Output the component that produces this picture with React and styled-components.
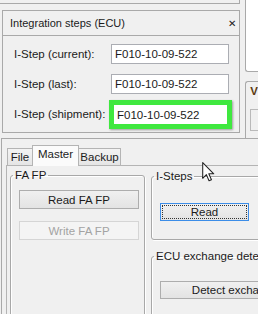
import React from 'react';
import styled, { createGlobalStyle, css } from 'styled-components';

const GlobalStyle = createGlobalStyle`
  html, body {
    margin: 0;
    padding: 0;
    background: #f0f0f0;
  }
  body {
    font-family: "Liberation Sans", Arial, sans-serif;
    font-size: 11.5px;
    color: #1b1b1b;
  }
`;

const steps = [
  { label: 'I-Step (current):', value: 'F010-10-09-522' },
  { label: 'I-Step (last):', value: 'F010-10-09-522' },
  { label: 'I-Step (shipment):', value: 'F010-10-09-522', marked: true },
];

const tabs = [
  { name: 'File', width: 26 },
  { name: 'Master', width: 47, active: true },
  { name: 'Backup', width: 43 },
];

const App = () => (
  <>
    <GlobalStyle />
    <Screen>
      <TopRow>
        <LeftCol>
          <PrevPanelEdge />
          <StepsPanel>
            <PanelHeader>
              <span>Integration steps (ECU)</span>
              <CloseGlyph>✕</CloseGlyph>
            </PanelHeader>
            <StepRows>
              {steps.map((s) => (
                <StepRow key={s.label}>
                  <StepLabel>{s.label}</StepLabel>
                  <StepField $marked={s.marked}>{s.value}</StepField>
                </StepRow>
              ))}
            </StepRows>
          </StepsPanel>
        </LeftCol>
        <SideCol>
          <SideTopBox />
          <SideBox>
            <SideLetter>V</SideLetter>
            <SideButton />
          </SideBox>
        </SideCol>
      </TopRow>
      <Lower>
        <TabBar>
          {tabs.map((t) => (
            <Tab key={t.name} $active={t.active} $w={t.width}>
              {t.name}
            </Tab>
          ))}
        </TabBar>
        <TabPane>
          <FaGroup>
            <Legend>FA FP</Legend>
            <WideButton>Read FA FP</WideButton>
            <WideButton disabled>Write FA FP</WideButton>
          </FaGroup>
          <RightStack>
            <StepsGroup>
              <Legend>I-Steps</Legend>
              <FocusButton>Read</FocusButton>
            </StepsGroup>
            <ExchangeGroup>
              <Legend>ECU exchange detection</Legend>
              <LongButton>Detect exchange</LongButton>
            </ExchangeGroup>
          </RightStack>
        </TabPane>
      </Lower>
      <Cursor viewBox="0 0 12 19" width="13" height="20">
        <path
          d="M0.5 0.5 L0.5 15.5 L4 12 L6.5 17.8 L8.8 16.8 L6.3 11.2 L11 11.2 Z"
          fill="#fff"
          stroke="#222"
          strokeWidth="1"
          strokeLinejoin="round"
        />
      </Cursor>
    </Screen>
  </>
);

const Screen = styled.div`
  position: relative;
  width: 258px;
  height: 314px;
  overflow: hidden;
`;

const TopRow = styled.div`
  display: flex;
  height: 138px;
`;

const LeftCol = styled.div`
  width: 242px;
  display: flex;
  flex-direction: column;
`;

const PrevPanelEdge = styled.div`
  height: 3px;
  border-bottom: 1px solid #a9a9a9;
  border-right: 1px solid #a9a9a9;
`;

const StepsPanel = styled.div`
  margin: 6px 0 0 2px;
  height: 121px;
  border: 1px solid #a9a9a9;
  display: flex;
  flex-direction: column;
`;

const PanelHeader = styled.div`
  height: 24px;
  border-bottom: 1px solid #a9a9a9;
  display: flex;
  align-items: center;
  justify-content: space-between;
  padding: 0 3px 0 7px;
  font-size: 11px;
`;

const CloseGlyph = styled.span`
  font-family: "DejaVu Sans", sans-serif;
  font-size: 10px;
  font-weight: bold;
  color: #222;
`;

const StepRows = styled.div`
  display: flex;
  flex-direction: column;
  gap: 10px;
  padding: 8px 0 0 11px;
`;

const StepRow = styled.div`
  display: flex;
  align-items: center;
  height: 20px;
`;

const StepLabel = styled.div`
  width: 97px;
`;

const StepField = styled.div`
  box-sizing: border-box;
  width: 118px;
  height: 20px;
  border: 1px solid #abadb3;
  background: #fff;
  padding-left: 3px;
  display: flex;
  align-items: center;
  ${(p) =>
    p.$marked &&
    css`
      width: 123px;
      height: 29px;
      margin: -4px -4px -5px -2px;
      border: 5px solid #3fe83f;
      box-shadow: 1px 1px 2px rgba(0, 0, 0, 0.35);
      padding-left: 3px;
    `}
`;

const SideCol = styled.div`
  flex: 1;
  display: flex;
  flex-direction: column;
  padding-left: 5px;
`;

const SideTopBox = styled.div`
  height: 71px;
  background: #fff;
  border-left: 1px solid #a9a9a9;
  border-bottom: 1px solid #a9a9a9;
  border-bottom-left-radius: 3px;
`;

const SideBox = styled.div`
  margin-top: 9px;
  flex: 1;
  border-left: 1px solid #a9a9a9;
  border-top: 1px solid #a9a9a9;
  border-top-left-radius: 3px;
  padding: 3px 0 0 4px;
`;

const SideLetter = styled.div`
  color: #5b3a10;
  font-weight: bold;
  height: 18px;
`;

const SideButton = styled.div`
  margin-top: 6px;
  height: 20px;
  border: 1px solid #b9b9b9;
  border-right: none;
  background: #f0f0f0;
`;

const Lower = styled.div`
  margin-left: 1px;
  height: 175px;
  border-top: 1px solid #a9a9a9;
  border-left: 1px solid #a9a9a9;
  padding-left: 4px;
`;

const TabBar = styled.div`
  display: flex;
  align-items: flex-end;
  height: 20px;
  margin-top: 6px;
  padding-left: 2px;
`;

const Tab = styled.div`
  box-sizing: border-box;
  width: ${(p) => p.$w}px;
  height: 17px;
  border: 1px solid #b4b4b4;
  border-bottom: none;
  margin-left: -1px;
  background: linear-gradient(#f3f3f3, #e5e5e5);
  display: flex;
  justify-content: center;
  padding-top: 2px;
  line-height: 13px;
  ${(p) =>
    p.$active &&
    css`
      height: 21px;
      margin-bottom: -1px;
      background: #fbfbfb;
      position: relative;
      z-index: 1;
      padding-top: 2px;
    `}
`;

const TabPane = styled.div`
  border-top: 1px solid #b4b4b4;
  border-left: 1px solid #b4b4b4;
  height: 160px;
  display: flex;
  gap: 6px;
  padding: 3px 0 0 3px;
`;

const Group = styled.fieldset`
  margin: 0;
  border: 1px solid #a8a8a8;
  border-radius: 3px;
  box-shadow: inset 1px 1px 0 #fff, 1px 1px 0 #fff;
  min-width: 0;
`;

const Legend = styled.legend`
  padding: 0 2px;
  margin-left: -6px;
  line-height: 13px;
`;

const FaGroup = styled(Group)`
  width: 135px;
  box-sizing: border-box;
  height: 200px;
  flex-shrink: 0;
  padding: 8px 6px 0 8px;
  display: flex;
  flex-direction: column;
  gap: 12px;
`;

const RightStack = styled.div`
  display: flex;
  flex-direction: column;
  gap: 10px;
  flex-shrink: 0;
  width: 200px;
  padding-top: 1px;
`;

const StepsGroup = styled(Group)`
  height: 71px;
  box-sizing: border-box;
  padding: 20px 0 0 8px;
`;

const ExchangeGroup = styled(Group)`
  height: 80px;
  box-sizing: border-box;
  padding: 18px 0 0 8px;
`;

const buttonBase = css`
  box-sizing: border-box;
  height: 19px;
  font: inherit;
  color: #1b1b1b;
  border: 1px solid #adadad;
  background: linear-gradient(#f0f0f0, #e3e3e3);
  padding: 0;
  display: flex;
  align-items: center;
  justify-content: center;
`;

const WideButton = styled.button`
  ${buttonBase}
  width: 120px;
  &:disabled {
    color: #a3a3a3;
    background: #f4f4f4;
    border-color: #d5d5d5;
  }
`;

const FocusButton = styled.button`
  ${buttonBase}
  width: 89px;
  height: 18px;
  border-color: #3c8de8;
  outline: 1px dotted #333;
  outline-offset: -3px;
`;

const LongButton = styled.button`
  ${buttonBase}
  width: 150px;
  height: 18px;
`;

const Cursor = styled.svg`
  position: absolute;
  left: 202px;
  top: 162px;
`;

export default App;
